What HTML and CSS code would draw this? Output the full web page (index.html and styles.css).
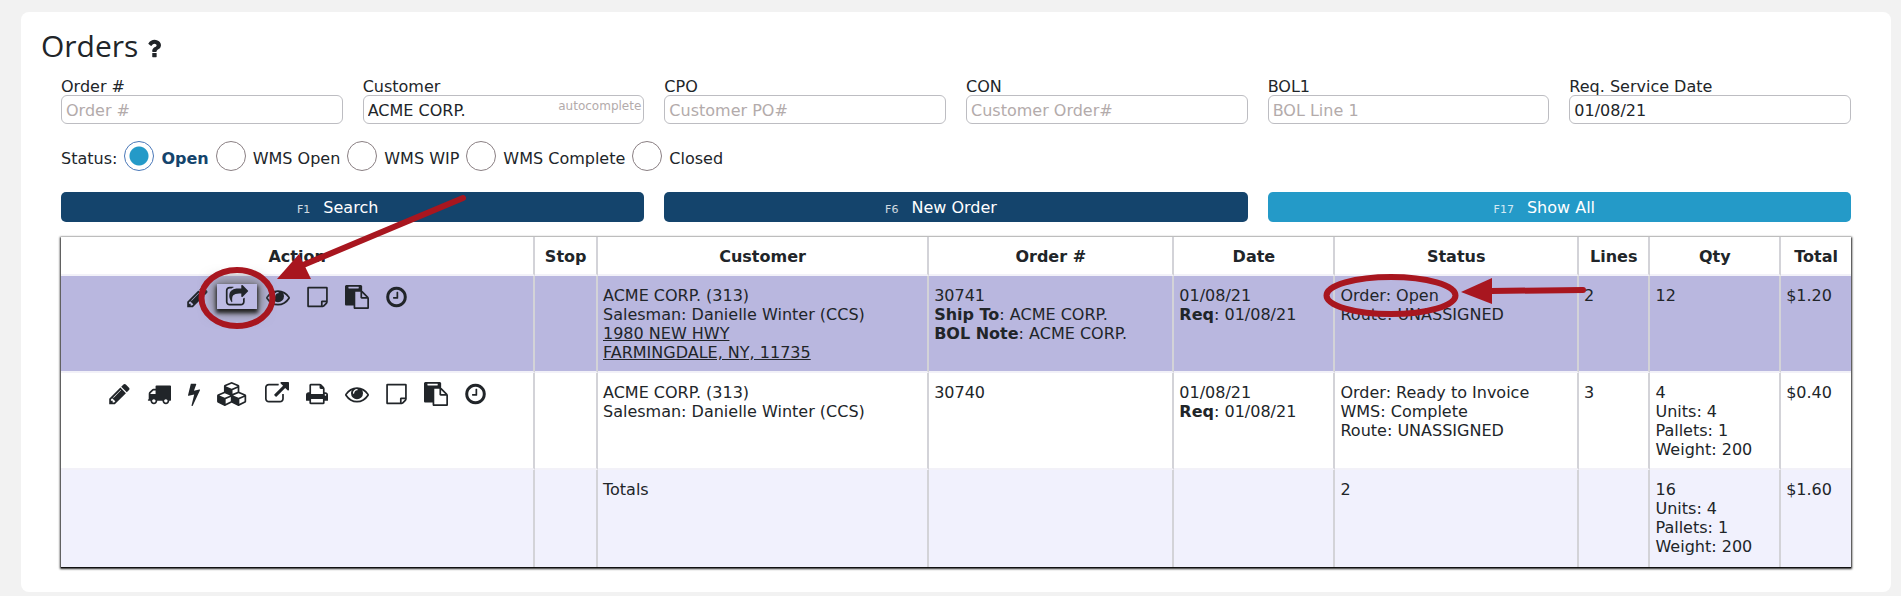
FILE: index.html
```html
<!DOCTYPE html>
<html lang="en">
	<head>
		<meta charset="UTF-8">
		<title>Orders</title>
		<link rel="stylesheet" href="styles.css">
	</head>
	<body>
		<!-- icon set -->
		<svg class="sprite" aria-hidden="true">
			<symbol id="i-question" viewBox="384 128 1024 1536"><path d="M1088 1256v240q0 16-12 28t-28 12h-240q-16 0-28-12t-12-28v-240q0-16 12-28t28-12h240q16 0 28 12t12 28zm316-600q0 54-15.5 101t-35 76.5-55 59.5-57.5 43.5-61 35.5q-41 23-68.5 65t-27.5 67q0 17-12 32.5t-28 15.5h-240q-15 0-25.5-18.5t-10.5-37.5v-45q0-83 65-156.5t143-108.5q59-27 84-56t25-76q0-42-46.5-74t-107.5-32q-65 0-108 29-35 25-107 115-13 16-31 16-12 0-25-8l-164-125q-13-10-15.5-25t5.5-28q160-266 464-266 80 0 161 31t146 83 106 127.5 41 158.5z"/></symbol>
			<symbol id="i-pencil" viewBox="128 0 1536 1792"><path d="M491 1536l91-91-235-235-91 91v107h128v128h107zm523-928q0-22-22-22-10 0-17 7l-542 542q-7 7-7 17 0 22 22 22 10 0 17-7l542-542q7-7 7-17zm-54-192l416 416-832 832h-416v-416zm683 96q0 53-37 90l-166 166-416-416 166-165q36-38 90-38 53 0 91 38l235 234q37 39 37 91z"/></symbol>
			<symbol id="i-truck" viewBox="0 0 1792 1792"><path d="M640 1408q0-52-38-90t-90-38-90 38-38 90 38 90 90 38 90-38 38-90zm-384-512h384v-256h-158q-13 0-22 9l-195 195q-9 9-9 22v30zm1280 512q0-52-38-90t-90-38-90 38-38 90 38 90 90 38 90-38 38-90zm256-1088v1024q0 15-4 26.5t-13.5 18.5-16.5 11.5-23.5 6-22.5 2-25.5 0-22.5-.5q0 106-75 181t-181 75-181-75-75-181h-384q0 106-75 181t-181 75-181-75-75-181h-64q-3 0-22.5.5t-25.5 0-22.5-2-23.5-6-16.5-11.5-13.5-18.5-4-26.5q0-26 19-45t45-19v-320q0-8-.5-35t0-38 2.5-34.5 6.5-37 14-30.5 22.5-30l198-198q19-19 50.5-32t58.5-13h160v-192q0-26 19-45t45-19h1024q26 0 45 19t19 45z"/></symbol>
			<symbol id="i-bolt" viewBox="448 0 896 1792"><path d="M1333 566q18 20 7 44l-540 1157q-13 25-42 25-4 0-14-2-17-5-25.5-19t-4.5-30l197-808-406 101q-4 1-12 1-18 0-31-11-18-15-13-39l201-825q4-14 16-23t28-9h328q19 0 32 12.5t13 29.5q0 8-5 18l-171 463 396-98q8-2 12-2 19 0 34 15z"/></symbol>
			<symbol id="i-cubes" viewBox="0 0 2304 1792"><path d="M640 1632l384-192v-314l-384 164v342zm-64-454l404-173-404-173-404 173zm1088 454l384-192v-314l-384 164v342zm-64-454l404-173-404-173-404 173zm-448-293l384-165v-266l-384 164v267zm-64-379l441-189-441-189-441 189zm1088 518v416q0 36-19 67t-52 47l-448 224q-25 14-57 14t-57-14l-448-224q-5-2-7-4-2 2-7 4l-448 224q-25 14-57 14t-57-14l-448-224q-33-16-52-47t-19-67v-416q0-38 21.500-70t56.500-48l434-186v-400q0-38 21.500-70t56.500-48l448-192q23-10 50-10t50 10l448 192q35 16 56.500 48t21.500 70v400l434 186q36 16 57 48t21 70z"/></symbol>
			<symbol id="i-share" viewBox="0 0 1792 1792"><path d="M1472 989v259q0 119-84.5 203.5t-203.5 84.5h-832q-119 0-203.5-84.5t-84.5-203.5v-832q0-119 84.5-203.5t203.5-84.5h255q13 0 22.5 9.5t9.5 22.5q0 27-26 32-77 26-133 60-10 4-16 4h-112q-66 0-113 47t-47 113v832q0 66 47 113t113 47h832q66 0 113-47t47-113v-214q0-19 18-29 28-13 54-37 16-16 35-8 21 9 21 29zm237-496l-384 384q-18 19-45 19-12 0-25-5-39-17-39-59v-192h-160q-323 0-438 131-119 137-74 473 3 23-20 34-8 2-12 2-16 0-26-13-10-14-21-31t-39.5-68.5-49.5-99.5-38.5-114-17.5-122q0-49 3.5-91t14-90 28-88 47-81.5 68.5-74 94.500-61.500 124.500-48.500 159.500-30.500 196.500-11h160v-192q0-42 39-59 13-5 25-5 26 0 45 19l384 384q19 19 19 45t-19 45z"/></symbol>
			<symbol id="i-external" viewBox="0 0 1792 1792"><path d="M1408 928v320q0 119-84.5 203.5t-203.5 84.5h-832q-119 0-203.5-84.5t-84.5-203.5v-832q0-119 84.5-203.5t203.5-84.5h704q14 0 23 9t9 23v64q0 14-9 23t-23 9h-704q-66 0-113 47t-47 113v832q0 66 47 113t113 47h832q66 0 113-47t47-113v-320q0-14 9-23t23-9h64q14 0 23 9t9 23zm384-864v512q0 26-19 45t-45 19-45-19l-176-176-652 652q-10 10-23 10t-23-10l-114-114q-10-10-10-23t10-23l652-652-176-176q-19-19-19-45t19-45 45-19h512q26 0 45 19t19 45z"/></symbol>
			<symbol id="i-print" viewBox="64 0 1664 1792"><path d="M448 1536h896v-256h-896v256zm0-640h896v-384h-160q-40 0-68-28t-28-68v-160h-640v640zm1152 64q0-26-19-45t-45-19-45 19-19 45 19 45 45 19 45-19 19-45zm128 0v416q0 13-9.5 22.5t-22.5 9.5h-224v160q0 40-28 68t-68 28h-960q-40 0-68-28t-28-68v-160h-224q-13 0-22.5-9.5t-9.5-22.5v-416q0-79 56.5-135.5t135.5-56.5h64v-544q0-40 28-68t68-28h672q40 0 88 20t76 48l152 152q28 28 48 76t20 88v256h64q79 0 135.5 56.5t56.5 135.5z"/></symbol>
			<symbol id="i-eye" viewBox="0 0 1792 1792"><path d="M1664 960q-152-236-381-353 61 104 61 225 0 185-131.5 316.5t-316.5 131.5-316.5-131.5-131.5-316.5q0-121 61-225-229 117-381 353 133 205 333.5 326.5t434.5 121.5 434.5-121.5 333.5-326.5zm-720-384q0-20-14-34t-34-14q-125 0-214.5 89.5t-89.5 214.5q0 20 14 34t34 14 34-14 14-34q0-86 61-147t147-61q20 0 34-14t14-34zm848 384q0 34-20 69-140 230-376.5 368.5t-499.5 138.5-499.5-139-376.5-368q-20-35-20-69t20-69q140-229 376.5-368t499.5-139 499.5 139 376.5 368q20 35 20 69z"/></symbol>
			<symbol id="i-note" viewBox="128 0 1536 1792"><path d="M1528 1280h-248v248q29-10 41-22l185-185q12-12 22-41zm-280-128h288v-896h-1280v1280h896v-288q0-40 28-68t68-28zm416-928v1024q0 40-20 88t-48 76l-184 184q-28 28-76 48t-88 20h-1024q-40 0-68-28t-28-68v-1344q0-40 28-68t68-28h1344q40 0 68 28t28 68z"/></symbol>
			<symbol id="i-paste" viewBox="0 0 1792 1792"><path d="M768 1664h896v-640h-416q-40 0-68-28t-28-68v-416h-384v1152zm256-1440v-64q0-13-9.5-22.5t-22.5-9.5h-704q-13 0-22.5 9.5t-9.5 22.5v64q0 13 9.5 22.5t22.5 9.5h704q13 0 22.5-9.5t9.5-22.5zm256 672h299l-299-299v299zm512 128v672q0 40-28 68t-68 28h-960q-40 0-68-28t-28-68v-160h-544q-40 0-68-28t-28-68v-1344q0-40 28-68t68-28h1088q40 0 68 28t28 68v328q21 13 36 28l408 408q28 28 48 76t20 88z"/></symbol>
			<symbol id="i-clock" viewBox="128 0 1536 1792"><path d="M1024 544v448q0 14-9 23t-23 9h-320q-14 0-23-9t-9-23v-64q0-14 9-23t23-9h224v-352q0-14 9-23t23-9h64q14 0 23 9t9 23zm416 352q0-148-73-273t-198-198-273-73-273 73-198 198-73 273 73 273 198 198 273 73 273-73 198-198 73-273zm224 0q0 209-103 385.5t-279.5 279.5-385.5 103-385.5-103-279.500-279.500-103-385.500 103-385.500 279.500-279.500 385.500-103 385.500 103 279.500 279.500 103 385.500z"/></symbol>
		</svg>

		<main class="card">
			<h1>Orders <svg class="help"><use href="#i-question"/></svg></h1>
			<form class="search" onsubmit="return false">
				<div class="fields">
					<div class="field">
						<label for="order">Order #</label>
						<input type="text" id="order" placeholder="Order #">
					</div>
					<div class="field">
						<label for="customer">Customer</label>
						<input type="text" id="customer" value="ACME CORP.">
						<span class="hint">autocomplete</span>
					</div>
					<div class="field">
						<label for="cpo">CPO</label>
						<input type="text" id="cpo" placeholder="Customer PO#">
					</div>
					<div class="field">
						<label for="con">CON</label>
						<input type="text" id="con" placeholder="Customer Order#">
					</div>
					<div class="field">
						<label for="bol">BOL1</label>
						<input type="text" id="bol" placeholder="BOL Line 1">
					</div>
					<div class="field">
						<label for="date">Req. Service Date</label>
						<input type="text" id="date" value="01/08/21">
					</div>
				</div>
				<div class="status">
					<span>Status:</span>
					<input type="radio" name="status" id="s1" checked><label for="s1">Open</label>
					<input type="radio" name="status" id="s2"><label for="s2">WMS Open</label>
					<input type="radio" name="status" id="s3"><label for="s3">WMS WIP</label>
					<input type="radio" name="status" id="s4"><label for="s4">WMS Complete</label>
					<input type="radio" name="status" id="s5"><label for="s5">Closed</label>
				</div>
				<div class="buttons">
					<button type="submit" class="btn"><small>F1</small>Search</button>
					<button type="button" class="btn"><small>F6</small>New Order</button>
					<button type="button" class="btn light"><small>F17</small>Show All</button>
				</div>
			</form>

			<table class="orders">
				<colgroup>
					<col class="c-action"><col class="c-stop"><col class="c-customer"><col class="c-order"><col class="c-date"><col class="c-status"><col class="c-lines"><col class="c-qty"><col class="c-total">
				</colgroup>
				<thead>
					<tr>
						<th>Action</th><th>Stop</th><th>Customer</th><th>Order #</th><th>Date</th><th>Status</th><th>Lines</th><th>Qty</th><th>Total</th>
					</tr>
				</thead>
				<tbody>
					<tr class="selected">
						<td>
							<div class="actions">
								<button type="button" aria-label="Edit"><svg class="w21"><use href="#i-pencil"/></svg></button>
								<span class="marked">
									<button type="button" class="active" aria-label="Share"><svg><use href="#i-share"/></svg></button>
									<svg class="mark mark-share" viewBox="0 0 272 140">
										<ellipse cx="41" cy="107" rx="35.500" ry="28"/>
										<path d="M100 77L267 7"/>
										<polygon points="81,88 103,63 115,88"/>
									</svg>
								</span>
								<button type="button" aria-label="View"><svg><use href="#i-eye"/></svg></button>
								<button type="button" aria-label="Note"><svg class="w21"><use href="#i-note"/></svg></button>
								<button type="button" aria-label="Copy"><svg><use href="#i-paste"/></svg></button>
								<button type="button" aria-label="History"><svg class="w21"><use href="#i-clock"/></svg></button>
							</div>
						</td>
						<td></td>
						<td>ACME CORP. (313)<br>Salesman: Danielle Winter (CCS)<br><a href="#">1980 NEW HWY<br>FARMINGDALE, NY, 11735</a></td>
						<td>30741<br><b>Ship To</b>: ACME CORP.<br><b>BOL Note</b>: ACME CORP.</td>
						<td>01/08/21<br><b>Req</b>: 01/08/21</td>
						<td>
							<span class="marked">Order: Open
								<svg class="mark mark-status" viewBox="0 0 268 48">
									<ellipse cx="70" cy="23.500" rx="64.500" ry="18.500"/>
									<path d="M170 19L262 18"/>
									<polygon points="140,20 171,6 171,32"/>
								</svg>
							</span><br>Route: UNASSIGNED
						</td>
						<td>2</td>
						<td>12</td>
						<td>$1.20</td>
					</tr>
					<tr>
						<td>
							<div class="actions">
								<button type="button" aria-label="Edit"><svg class="w21"><use href="#i-pencil"/></svg></button>
								<button type="button" aria-label="Ship"><svg><use href="#i-truck"/></svg></button>
								<button type="button" aria-label="Quick process"><svg class="w12"><use href="#i-bolt"/></svg></button>
								<button type="button" aria-label="Items"><svg class="w31"><use href="#i-cubes"/></svg></button>
								<button type="button" aria-label="Open"><svg><use href="#i-external"/></svg></button>
								<button type="button" aria-label="Print"><svg class="w22"><use href="#i-print"/></svg></button>
								<button type="button" aria-label="View"><svg><use href="#i-eye"/></svg></button>
								<button type="button" aria-label="Note"><svg class="w21"><use href="#i-note"/></svg></button>
								<button type="button" aria-label="Copy"><svg><use href="#i-paste"/></svg></button>
								<button type="button" aria-label="History"><svg class="w21"><use href="#i-clock"/></svg></button>
							</div>
						</td>
						<td></td>
						<td>ACME CORP. (313)<br>Salesman: Danielle Winter (CCS)</td>
						<td>30740</td>
						<td>01/08/21<br><b>Req</b>: 01/08/21</td>
						<td>Order: Ready to Invoice<br>WMS: Complete<br>Route: UNASSIGNED</td>
						<td>3</td>
						<td>4<br>Units: 4<br>Pallets: 1<br>Weight: 200</td>
						<td>$0.40</td>
					</tr>
				</tbody>
				<tfoot>
					<tr>
						<td></td>
						<td></td>
						<td>Totals</td>
						<td></td>
						<td></td>
						<td>2</td>
						<td></td>
						<td>16<br>Units: 4<br>Pallets: 1<br>Weight: 200</td>
						<td>$1.60</td>
					</tr>
				</tfoot>
			</table>
		</main>
	</body>
</html>
```

FILE: styles.css
```css
*{
	box-sizing:border-box;
}
body{
	margin:0;
	padding:12px 10px 4px 21px;
	background-color:#f2f2f2;
	color:#212529;
	font:16px/19px "DejaVu Sans",Verdana,sans-serif;
}
.sprite{
	position:absolute;
	width:0;
	height:0;
}
.card{
	background-color:#fff;
	border-radius:8px;
	padding:14px 40px 25px;
}
h1{
	margin:0 0 12px -20px;
	font:30px/40px "Open Sans","Noto Sans",sans-serif;
}
.help{
	width:14px;
	height:21px;
	margin-left:1px;
	vertical-align:-2px;
}
svg{
	fill:#212529;
}

/* search form */
.fields{
	display:grid;
	grid-template-columns:repeat(6,1fr);
	gap:20px;
}
.field{
	position:relative;
}
.field label{
	display:block;
	line-height:17px;
}
.field input{
	display:block;
	width:100%;
	height:29px;
	padding:1px 4px 0;
	border:1px solid #bdbdc2;
	border-radius:6px;
	background-color:#fff;
	color:#212529;
	font:inherit;
}
.field input::placeholder{
	color:#b3abab;
	opacity:1;
}
.hint{
	position:absolute;
	right:3px;
	bottom:8px;
	color:#b3abab;
	font-size:12px;
}
.status{
	display:flex;
	align-items:flex-end;
	gap:7px;
	margin-top:17px;
	line-height:25px;
}
.status input{
	appearance:none;
	width:30px;
	height:30px;
	margin:0;
	border:1px solid #8a7f83;
	border-radius:50%;
}
.status input:checked{
	border-color:#4a78b8;
	background:radial-gradient(circle,#249ac8 9px,#fff 10px);
}
.status input:checked + label{
	color:#14446c;
	font-weight:bold;
}
.buttons{
	display:grid;
	grid-template-columns:repeat(3,1fr);
	gap:20px;
	margin:21px 0 15px;
}
.btn{
	height:30px;
	padding:2px 30px 0 0;
	border:0;
	border-radius:5px;
	background-color:#14446c;
	color:#fff;
	font:inherit;
}
.btn small{
	margin-right:13px;
	font-size:11px;
	opacity:.8;
}
.btn.light{
	background-color:#249ac8;
}

/* orders table */
.orders{
	width:100%;
	table-layout:fixed;
	border-spacing:0;
	box-shadow:0 1px 1px 0 #111,0 1px 2px 1px #333;
}
.c-action{ width:26.5%; }
.c-stop{ width:3.5%; }
.c-customer{ width:18.5%; }
.c-order{ width:13.7%; }
.c-date{ width:9%; }
.c-status{ width:13.6%; }
.c-lines{ width:4%; }
.c-qty{ width:7.3%; }
.c-total{ width:3.9%; }
th,td{
	border-right:2px solid #d3d3d8;
	border-bottom:2px solid #f2f1f8;
	background-color:#fff;
}
th:last-child,td:last-child{
	border-right:0;
}
th{
	padding:10px 0 8px;
}
td{
	height:97px;
	padding:10px 5px 9px;
	vertical-align:top;
}
.selected td{
	background-color:#b9b7df;
}
tfoot td{
	border-bottom:0;
	background-color:#f1f1fd;
}
td a{
	color:inherit;
}
.actions{
	display:flex;
	justify-content:center;
	gap:1px;
	margin-top:-2px;
}
.actions button{
	display:block;
	height:25px;
	padding:0 8px;
	border:0;
	background:none;
}
.actions button svg{
	display:block;
	width:24px;
	height:24px;
}
.actions button .w12{ width:12px; }
.actions button .w21{ width:21px; }
.actions button .w22{ width:22px; }
.actions button .w31{ width:31px; }
.actions .active{
	background-color:#bdbbe4;
	box-shadow:0 3px 4px 1px #222,0 0 14px 4px #777;
}

/* red marks drawn over the table */
.marked{
	position:relative;
}
.mark{
	position:absolute;
	z-index:1;
	fill:#a8161f;
	pointer-events:none;
}
.mark ellipse,.mark path{
	fill:none;
	stroke:#a8161f;
	stroke-width:6px;
	stroke-linecap:round;
}
.mark-share{
	left:-21px;
	top:-93px;
	width:272px;
	height:140px;
}
.mark-status{
	left:-19px;
	top:-14px;
	width:268px;
	height:48px;
}
```
